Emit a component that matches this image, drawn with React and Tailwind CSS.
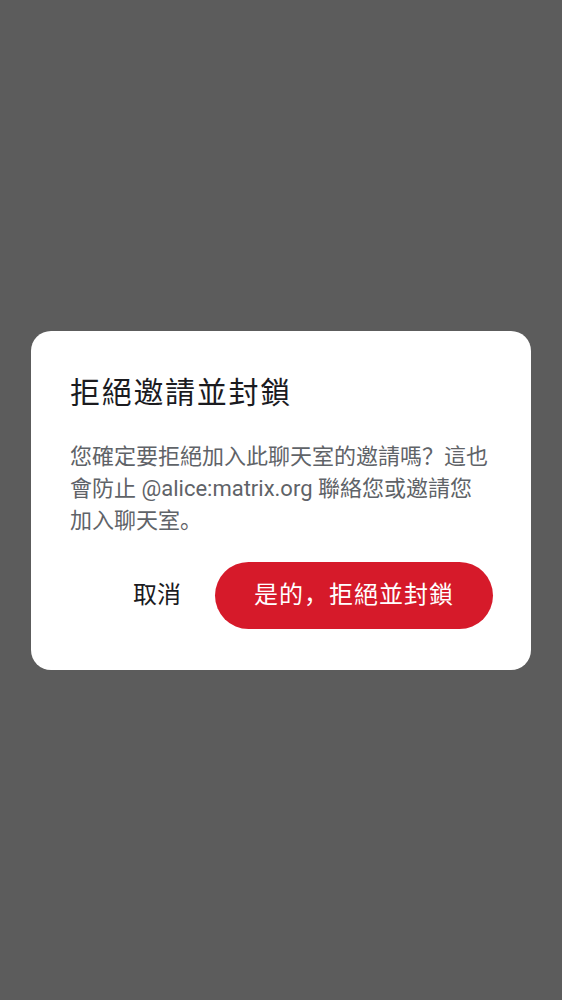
const fontStack = { fontFamily: 'Roboto, "Noto Sans CJK SC", sans-serif' };

export default function App() {
  return (
    <div
      className="h-screen w-full bg-[#5c5c5c] flex items-center justify-center"
      style={fontStack}
    >
      {/* Dialog */}
      <div className="w-[500px] bg-white rounded-[20px] px-[39px] pt-[44px] pb-[41px] flex flex-col">
        <h2 className="text-[30px] leading-[36px] tracking-[1.7px] text-[#1b1b1f]">拒絕邀請並封鎖</h2>
        <p className="mt-[30px] text-[22px] leading-[32px] text-[#5f6368]">
          您確定要拒絕加入此聊天室的邀請嗎？這也會防止 @alice:matrix.org 聯絡您或邀請您加入聊天室。
        </p>
        <div className="mt-[25px] flex items-center justify-end gap-[16px]">
          <button className="h-[67px] px-[18px] text-[24px] text-[#1b1b1f] rounded-full">
            取消
          </button>
          <button className="h-[67px] w-[278px] mr-[-1px] rounded-full bg-[#d61a2a] text-white text-[24px] tracking-[1px]">
            是的，拒絕並封鎖
          </button>
        </div>
      </div>
    </div>
  );
}
